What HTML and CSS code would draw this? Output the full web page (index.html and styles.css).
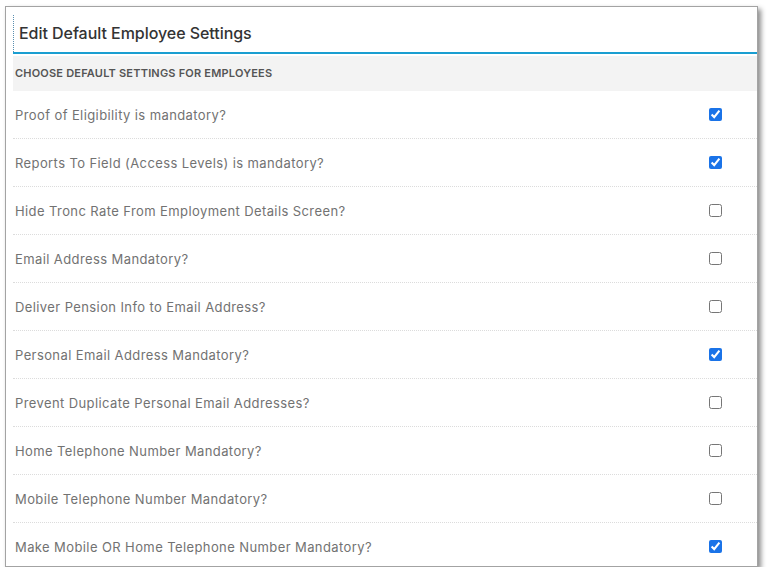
FILE: index.html
```html
<!DOCTYPE html>
<html>
<head>
    <meta name="viewport" content="width=device-width, initial-scale=1">
    <link rel="stylesheet" href="styles.css">
</head>
<body>
    <div class="frame">
        <div class="panel">
            <div class="panelTitle">
                <h2>Edit Default Employee Settings</h2>
            </div>
            <div class="sectionHead">Choose default settings for employees</div>

            <div class="settingRow">
                <label>Proof of Eligibility is mandatory?</label>
                <input type="checkbox" checked>
            </div>
            <div class="settingRow">
                <label>Reports To Field (Access Levels) is mandatory?</label>
                <input type="checkbox" checked>
            </div>
            <div class="settingRow">
                <label>Hide Tronc Rate From Employment Details Screen?</label>
                <input type="checkbox">
            </div>
            <div class="settingRow">
                <label>Email Address Mandatory?</label>
                <input type="checkbox">
            </div>
            <div class="settingRow">
                <label>Deliver Pension Info to Email Address?</label>
                <input type="checkbox">
            </div>
            <div class="settingRow">
                <label>Personal Email Address Mandatory?</label>
                <input type="checkbox" checked>
            </div>
            <div class="settingRow">
                <label>Prevent Duplicate Personal Email Addresses?</label>
                <input type="checkbox">
            </div>
            <div class="settingRow">
                <label>Home Telephone Number Mandatory?</label>
                <input type="checkbox">
            </div>
            <div class="settingRow">
                <label>Mobile Telephone Number Mandatory?</label>
                <input type="checkbox">
            </div>
            <div class="settingRow">
                <label>Make Mobile OR Home Telephone Number Mandatory?</label>
                <input type="checkbox" checked>
            </div>
        </div>
    </div>
</body>
</html>
```

FILE: styles.css
```css
html, body {
    margin: 0;
    padding: 0;
    background: #ffffff;
}

body {
    font-family: Inter, "Noto Sans", Arial, sans-serif;
}

.frame {
    margin: 6px 0 0 5px;
    width: 751px;
    height: 559px;
    border: 1px solid #a3a3a3;
    box-shadow: 3px 3px 5px rgba(0, 0, 0, 0.45);
    background: #fff;
    overflow: hidden;
}

.panel {
    padding: 8px 0 0 7px;
}

.panelTitle {
    border-bottom: 2px solid #1a9ed1;
}

.panelTitle h2 {
    margin: 0;
    height: 37px;
    line-height: 37px;
    padding-left: 5px;
    border-left: 1px dotted #5a8fb0;
    font-size: 16px;
    font-weight: 500;
    color: #333;
    letter-spacing: -0.05px;
}

.sectionHead {
    margin-top: 2px;
    height: 35px;
    line-height: 35px;
    padding-left: 2px;
    background: #f3f3f3;
    font-size: 11px;
    font-weight: 600;
    color: #555;
    letter-spacing: 0.2px;
    text-transform: uppercase;
}

.settingRow {
    display: flex;
    align-items: center;
    justify-content: space-between;
    height: 47px;
    padding: 0 35px 0 2px;
    border-bottom: 1px dotted #dcdcdc;
}

.settingRow:first-of-type {
    margin-top: 1px;
}

.settingRow label {
    font-size: 13px;
    letter-spacing: 0.4px;
    color: #727272;
}

.settingRow input {
    margin: 0;
    width: 13px;
    height: 13px;
    accent-color: #1a73e8;
}
```
